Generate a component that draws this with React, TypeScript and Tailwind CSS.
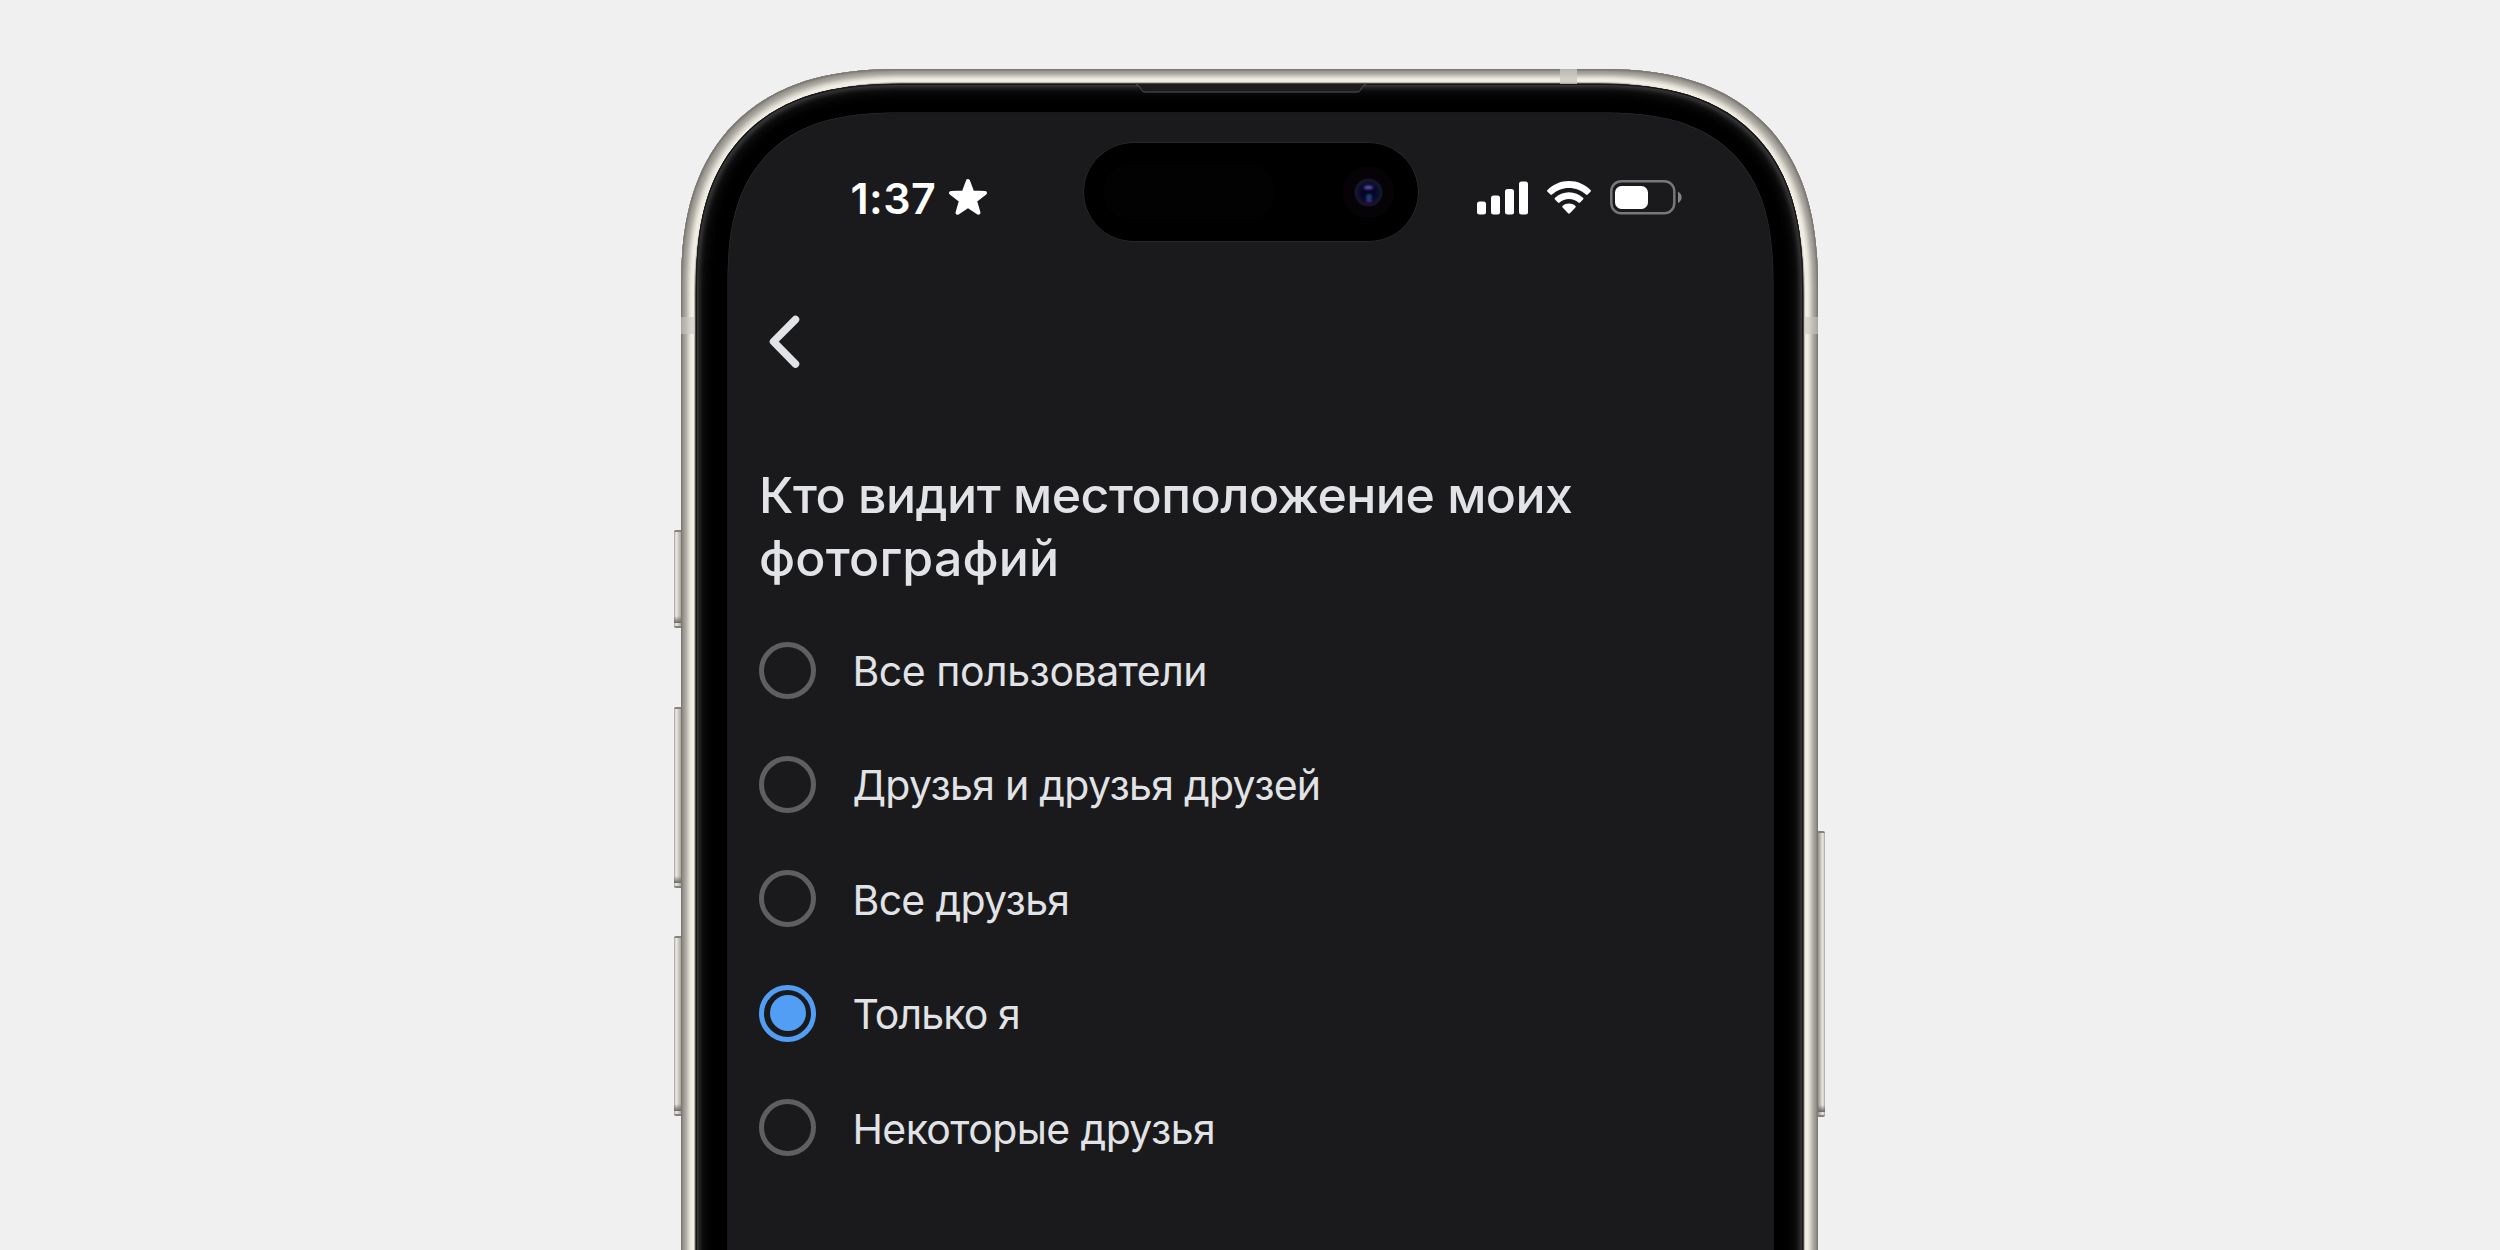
import { useState } from 'react';
import clsx from 'clsx';

const options = [
  { id: 'all', label: 'Все пользователи', classNames: 'tracking-[-0.47px]' },
  { id: 'friends-of-friends', label: 'Друзья и друзья друзей', classNames: 'tracking-[-0.72px]' },
  { id: 'friends', label: 'Все друзья', classNames: 'tracking-[-0.7px]' },
  { id: 'only-me', label: 'Только я', classNames: 'tracking-[-0.9px]' },
  { id: 'some', label: 'Некоторые друзья', classNames: 'tracking-[-0.6px]' },
];

const SideButton = ({ side, classNames }: { side: 'left' | 'right'; classNames: string }) => (
  <div
    aria-hidden
    className={clsx(
      'flex flex-col justify-end border-y-2 border-[#85827c] pb-[3px]',
      side === 'left'
        ? 'rounded-l-[2px] bg-linear-to-r from-[#a3a19c] via-[#eeece6] via-30% to-[#aaa79f]'
        : 'rounded-r-[2px] bg-linear-to-l from-[#a3a19c] via-[#eeece6] via-30% to-[#96938b]',
      classNames,
    )}
  >
    <div className="h-[7px] bg-linear-to-b from-transparent to-[#6b6862]" />
  </div>
);

const SignalIcon = () => (
  <svg width="51" height="34" viewBox="0 0 51 34" aria-hidden>
    <g fill="currentColor">
      <rect x="0" y="20.5" width="9" height="13" rx="2.5" />
      <rect x="14" y="14.5" width="9" height="19" rx="2.5" />
      <rect x="28" y="8" width="9" height="25.5" rx="2.5" />
      <rect x="42" y="0.5" width="9" height="33" rx="2.5" />
    </g>
  </svg>
);

const WifiIcon = () => (
  <svg width="44" height="33" viewBox="0 0 44 33" aria-hidden>
    <g fill="currentColor">
      <path d="M22 0C30.5 0 38 3.400 43.500 8.900 44.100 9.500 44.100 10.100 43.500 10.700L40.600 13.600C40.100 14.100 39.500 14.100 39 13.600 34.500 9.300 28.600 6.900 22 6.900S9.500 9.300 5 13.600C4.500 14.100 3.900 14.100 3.400 13.600L.5 10.700C-.1 10.100-.1 9.500.5 8.900 6 3.400 13.500 0 22 0Z" />
      <path d="M22 11.300C27.400 11.300 32.300 13.400 36 16.800 36.600 17.400 36.600 18 36 18.600L33 21.500C32.500 22 32 22 31.400 21.500 28.900 19.300 25.600 18.100 22 18.100S15.100 19.300 12.600 21.500C12 22 11.500 22 11 21.500L8 18.600C7.400 18 7.400 17.400 8 16.800 11.700 13.400 16.600 11.300 22 11.300Z" />
      <path d="M22 22.600C24.400 22.600 26.600 23.400 28.300 24.800 28.900 25.300 28.900 25.900 28.400 26.400L22.900 32.200C22.300 32.800 21.700 32.800 21.100 32.200L15.600 26.400C15.100 25.900 15.100 25.300 15.700 24.800 17.400 23.400 19.600 22.600 22 22.600Z" />
    </g>
  </svg>
);

const BatteryIcon = () => (
  <svg width="72" height="35" viewBox="0 0 72 35" aria-hidden>
    <rect x="1.3" y="1.3" width="63" height="32" rx="10" fill="none" stroke="#77777a" strokeWidth="2.5" />
    <rect x="5" y="6" width="33" height="23" rx="6.500" fill="currentColor" />
    <path d="M68 11.500C70.300 12.800 71.600 15 71.600 17.300S70.300 21.800 68 23.100Z" fill="#858588" />
  </svg>
);

const DynamicIsland = () => (
  <div className="flex h-[98px] w-[334px] items-center justify-between rounded-full bg-black pr-[23px] pl-[19px] ring-[0.5px] ring-[#333335]">
    <div className="h-[58px] w-[172px] rounded-full bg-[#020202]" />
    <svg width="53" height="53" viewBox="0 0 53 53" aria-hidden>
      <defs>
        <radialGradient id="lens">
          <stop offset="0" stopColor="#02021c" />
          <stop offset="0.6" stopColor="#050530" />
          <stop offset="1" stopColor="#10102a" />
        </radialGradient>
        <filter id="soft" x="-100%" y="-100%" width="300%" height="300%">
          <feGaussianBlur stdDeviation="1.2" />
        </filter>
      </defs>
      <circle cx="26.5" cy="26.5" r="26" fill="#060306" />
      <circle cx="26.5" cy="26.5" r="14" fill="#15152a" />
      <circle cx="26.5" cy="26.5" r="11" fill="url(#lens)" />
      <ellipse cx="26.5" cy="21.5" rx="4.5" ry="2" fill="#55519a" filter="url(#soft)" />
      <circle cx="27" cy="31" r="3" fill="#0b4e62" filter="url(#soft)" />
      <ellipse cx="27" cy="34.500" rx="3" ry="1.600" fill="#5b2599" filter="url(#soft)" />
    </svg>
  </div>
);

const StatusBar = () => (
  <div className="flex items-center pl-[122.5px] text-white">
    <div className="mt-[11px] flex w-[233px] items-center">
      <span className="w-[97px] text-[43px] leading-[62px] font-semibold tracking-[0.4px]">1:37</span>
      <svg width="40" height="39" viewBox="0 0 40 39" aria-hidden>
        <path
          d="M20 3 24.300 14.400 37 15 27 22.700 30.500 34.700 20 27.900 9.500 34.700 13 22.700 3 15 15.700 14.400Z"
          fill="currentColor"
          stroke="currentColor"
          strokeWidth="4"
          strokeLinejoin="round"
        />
      </svg>
    </div>
    <DynamicIsland />
    <div className="mt-[11px] ml-[59.500px] flex items-center gap-[19px]">
      <SignalIcon />
      <WifiIcon />
      <BatteryIcon />
    </div>
  </div>
);

const App = () => {
  const [selected, setSelected] = useState('only-me');

  return (
    <main className="flex h-[1250px] w-[2500px] overflow-hidden bg-[#f0f0f0] pt-[69px] pl-[674px] font-['Inter','Liberation_Sans',sans-serif]">
      <div className="flex w-[7px] shrink-0 flex-col pt-[461px]">
        <SideButton side="left" classNames="h-[98px]" />
        <SideButton side="left" classNames="mt-[79px] h-[181px]" />
        <SideButton side="left" classNames="mt-[48px] h-[180px]" />
      </div>

      <div className="relative h-[1450px] w-[1137px] shrink-0 rounded-[185px] bg-[#f3f0e6] p-[15px] shadow-[inset_0_0_0_1px_#7b7873,inset_0_0_0_2px_#8b8882,inset_0_0_0_3px_#999690,inset_0_0_0_4px_#a29f99,inset_0_0_0_5px_#aaa7a1,inset_0_0_0_6px_#b6b3ad,inset_0_0_0_7px_#c4c1ba,inset_0_0_0_8px_#d2cfc8,inset_0_0_0_9px_#dedbd3,inset_0_0_0_10px_#e8e5dc,inset_0_0_0_13px_#f0ede3,inset_0_0_0_14px_#bbb8b0,inset_0_0_0_15px_#4a4845] supports-[corner-shape:squircle]:rounded-[220px] supports-[corner-shape:squircle]:[corner-shape:superellipse(1.3)]">
        <div className="absolute top-0 left-[879px] h-[15px] w-[17px] bg-[#c9c7c1]/80" />
        <div className="absolute top-[248px] left-0 h-[17px] w-[14px] bg-[#c9c7c1]/60" />
        <div className="absolute top-[248px] right-0 h-[17px] w-[14px] bg-[#c9c7c1]/60" />

        <div className="flex h-full flex-col rounded-[170px] bg-black pr-[30px] pl-[32px] shadow-[inset_0_0_0_1px_#151515,inset_0_0_4px_3px_#3c3c3c,inset_0_0_14px_4px_#262626] supports-[corner-shape:squircle]:rounded-[204px] supports-[corner-shape:squircle]:[corner-shape:superellipse(1.32)]">
          <div className="flex h-[29px] shrink-0 justify-center">
            <svg width="230" height="9" viewBox="0 0 230 9" aria-hidden>
              <path d="M0 0H230C227 1 226 3 225 5 224 7.500 223 8.500 220 8.500H10C7 8.500 6 7.500 5 5 4 3 3 1 0 0Z" fill="#1c1c1c" />
              <path d="M0 .5C3 1 4 3 5 5 6 7.500 7 8 10 8H220C223 8 224 7.500 225 5 226 3 227 1 230 .5" fill="none" stroke="#505050" />
            </svg>
          </div>

          <div className="grow rounded-[140px] bg-[#1a1a1c] pt-[30px] shadow-[0_0_0_0.500px_#303032] supports-[corner-shape:squircle]:rounded-[172px] supports-[corner-shape:squircle]:[corner-shape:superellipse(1.36)]">
            <StatusBar />

            <button className="mt-[72px] ml-[40px] block" aria-label="Назад">
              <svg width="34" height="56" viewBox="0 0 34 56" aria-hidden>
                <path
                  d="M27.500 6.500 5.500 28.700 27.500 51"
                  fill="none"
                  stroke="#e1e3e6"
                  strokeWidth="7.500"
                  strokeLinecap="round"
                  strokeLinejoin="round"
                />
              </svg>
            </button>

            <h1 className="mt-[95px] px-[31px] text-[50px] leading-[63px] font-medium text-[#e1e3e6]">
              <span className="block tracking-[-0.5px]">Кто видит местоположение моих</span>
              <span className="block tracking-[0.2px]">фотографий</span>
            </h1>

            <div className="mt-[23px] flex flex-col px-[31px]" role="radiogroup">
              {options.map(({ id, label, classNames }) => (
                <button
                  key={id}
                  role="radio"
                  aria-checked={selected === id}
                  onClick={() => setSelected(id)}
                  className="flex h-[114.400px] items-center gap-[36.500px]"
                >
                  <span
                    className={clsx(
                      'flex size-[57px] items-center justify-center rounded-full border-5',
                      selected === id ? 'border-[#529ef4]' : 'border-[#5f5f62]',
                    )}
                  >
                    {selected === id && <span className="size-[36px] rounded-full bg-[#529ef4]" />}
                  </span>
                  <span className={clsx('mt-[3px] text-[41px] text-[#e1e3e6]', classNames)}>{label}</span>
                </button>
              ))}
            </div>
          </div>
        </div>
      </div>

      <div className="flex w-[7px] shrink-0 flex-col pt-[762px]">
        <SideButton side="right" classNames="h-[286px]" />
      </div>
    </main>
  );
};

export default App;
